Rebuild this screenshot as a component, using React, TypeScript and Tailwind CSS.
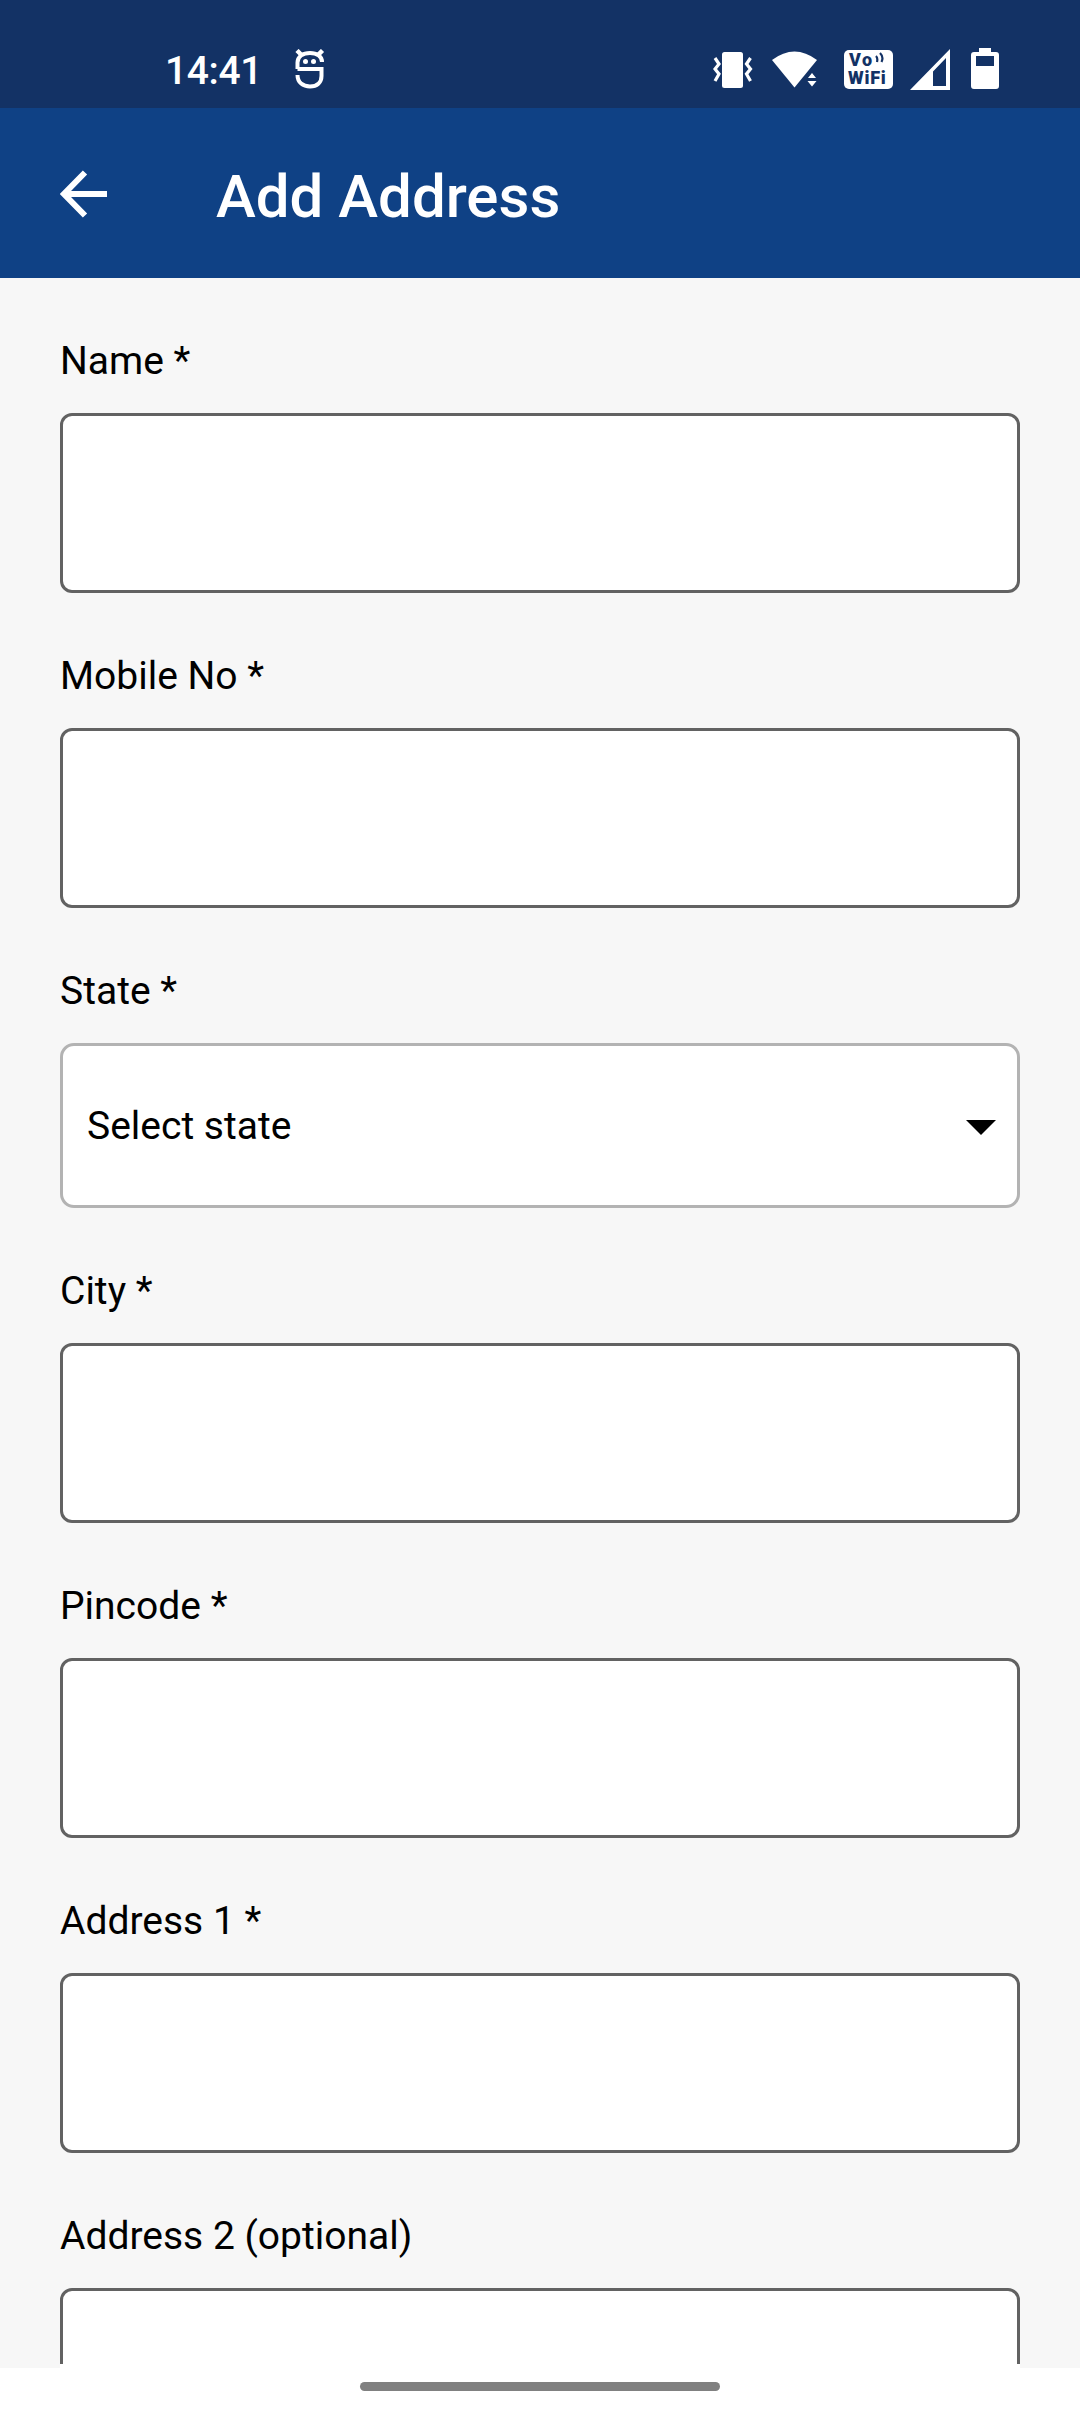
type FieldProps = { label: string; placeholder?: string };

function Label({ children }: { children: string }) {
  return (
    <label className="mt-[60px] mb-[29px] block h-[46px] text-[39px] leading-[46px] whitespace-pre text-black">
      {children}
    </label>
  );
}

function TextField({ label }: FieldProps) {
  return (
    <div className="flex shrink-0 flex-col">
      <Label>{label}</Label>
      <div className="h-[180px] rounded-[12px] border-[3px] border-[#626262] bg-white" />
    </div>
  );
}

function SelectField({ label, placeholder }: FieldProps) {
  return (
    <div className="flex shrink-0 flex-col">
      <Label>{label}</Label>
      <div className="flex h-[165px] items-center justify-between rounded-[14px] border-[3px] border-[#b3b3b3] bg-white pr-[21px] pl-[24px]">
        <span className="text-[39px] leading-[46px] text-black">{placeholder}</span>
        <svg width="30" height="15" viewBox="0 0 30 15" className="mt-[3px]">
          <path d="M0 0H30L15 15Z" fill="#000" />
        </svg>
      </div>
    </div>
  );
}

function AppGlyph() {
  return (
    <svg width="30" height="40" viewBox="0 0 30 40" fill="none" stroke="#fff" className="ml-[33px]">
      <path
        d="M2.500 20V13.500C2.500 7.500 8 4 15 4S27 7.500 27 13M2.500 20H26.500V27C26.500 33.500 22 37.500 15 37.500S2.500 33.500 2.500 26"
        strokeWidth="4"
      />
      <path d="M2 1.500L7 6.500M27.500 1.500L22.500 6.500" strokeWidth="4.500" />
      <circle cx="10.500" cy="12.500" r="2.500" fill="#fff" stroke="none" />
      <circle cx="18.500" cy="12.500" r="2.500" fill="#fff" stroke="none" />
    </svg>
  );
}

function StatusBar() {
  return (
    <div className="flex h-[108px] shrink-0 items-start bg-[#133265] pl-[165px] text-white">
      <div className="flex h-[40px] w-[548px] translate-y-[49px] items-center">
        <span className="mt-[4px] text-[39px] leading-[40px] font-medium tracking-[-0.4px]">14:41</span>
        <AppGlyph />
      </div>
      <div className="flex translate-y-[48px] items-start">
        <svg width="40" height="42" viewBox="0 0 40 42" fill="none" stroke="#fff" strokeWidth="3.200">
          <rect x="9" y="4" width="21" height="36" rx="2.500" fill="#fff" stroke="none" />
          <path d="M2 10L6 16L2 21L6 26L2 33M37.500 10L33.500 16L37.500 21L33.500 26L37.500 33" />
        </svg>
        <svg width="47" height="42" viewBox="0 0 47 42" fill="#fff" className="ml-[18px]">
          <path d="M1 12Q23.500 -5 46 12L23.500 39.500Z" />
          <path d="M35 31L41 23.500L47 31Z" stroke="#133265" strokeWidth="2" />
          <path d="M36.500 33H45.500L41 38.500Z" />
        </svg>
        <div className="mt-[2px] ml-[26px] flex h-[39px] w-[49px] flex-col rounded-[5px] bg-white pt-[1px] text-[#133265]">
          <div className="flex h-[18px] items-start pl-[5px] text-[18px] leading-[18px] font-black">
            <span className="tracking-[1.5px]">Vo</span>
            <svg width="11" height="12" viewBox="0 0 11 12" fill="none" stroke="#133265" strokeWidth="2.200" className="mt-[1px]">
              <path d="M2 4Q4 6 3 10M6 1Q10 5 7.500 10" />
            </svg>
          </div>
          <div className="h-[18px] pl-[4px] text-[18px] leading-[18px] font-black tracking-[0.8px]">WiFi</div>
        </div>
        <svg width="41" height="42" viewBox="0 0 41 42" className="ml-[17px]">
          <path fillRule="evenodd" fill="#fff" d="M0 42L40 1V42ZM23 23.500V38H36V10Z" />
        </svg>
        <svg width="28" height="42" viewBox="0 0 28 42" className="ml-[20px]">
          <path
            fillRule="evenodd"
            fill="#fff"
            d="M8 0H20V4H25Q28 4 28 7V38Q28 41 25 41H3Q0 41 0 38V7Q0 4 3 4H8ZM5 8V18H23V8Z"
          />
        </svg>
      </div>
    </div>
  );
}

function AppBar() {
  return (
    <header className="flex h-[170px] shrink-0 items-center bg-[#0f4185] pl-[60px] text-white">
      <svg width="48" height="48" viewBox="0 0 48 48" fill="none" stroke="#fff" strokeWidth="6" className="mt-[2px]">
        <path d="M25 2.500L4 24L25 45.500M4 24H47" />
      </svg>
      <h1 className="mt-[8px] ml-[108px] text-[60px] leading-[70px] font-medium">Add Address</h1>
    </header>
  );
}

export default function App() {
  return (
    <div className="flex h-[2412px] w-[1080px] flex-col overflow-hidden bg-white font-['Roboto',sans-serif]">
      <StatusBar />
      <AppBar />
      <main className="h-[2090px] shrink-0 bg-[#f7f7f7] px-[60px]">
        <div className="flex h-[2086px] flex-col overflow-hidden">
          <TextField label="Name *" />
          <TextField label="Mobile No *" />
          <SelectField label="State *" placeholder="Select state" />
          <TextField label="City *" />
          <TextField label="Pincode *" />
          <TextField label="Address 1 *" />
          <TextField label="Address 2 (optional)" />
        </div>
        <div className="h-[4px] bg-white" />
      </main>
      <div className="flex h-[44px] shrink-0 justify-center pt-[14px]">
        <div className="h-[9px] w-[360px] rounded-full bg-[#808080]" />
      </div>
    </div>
  );
}
